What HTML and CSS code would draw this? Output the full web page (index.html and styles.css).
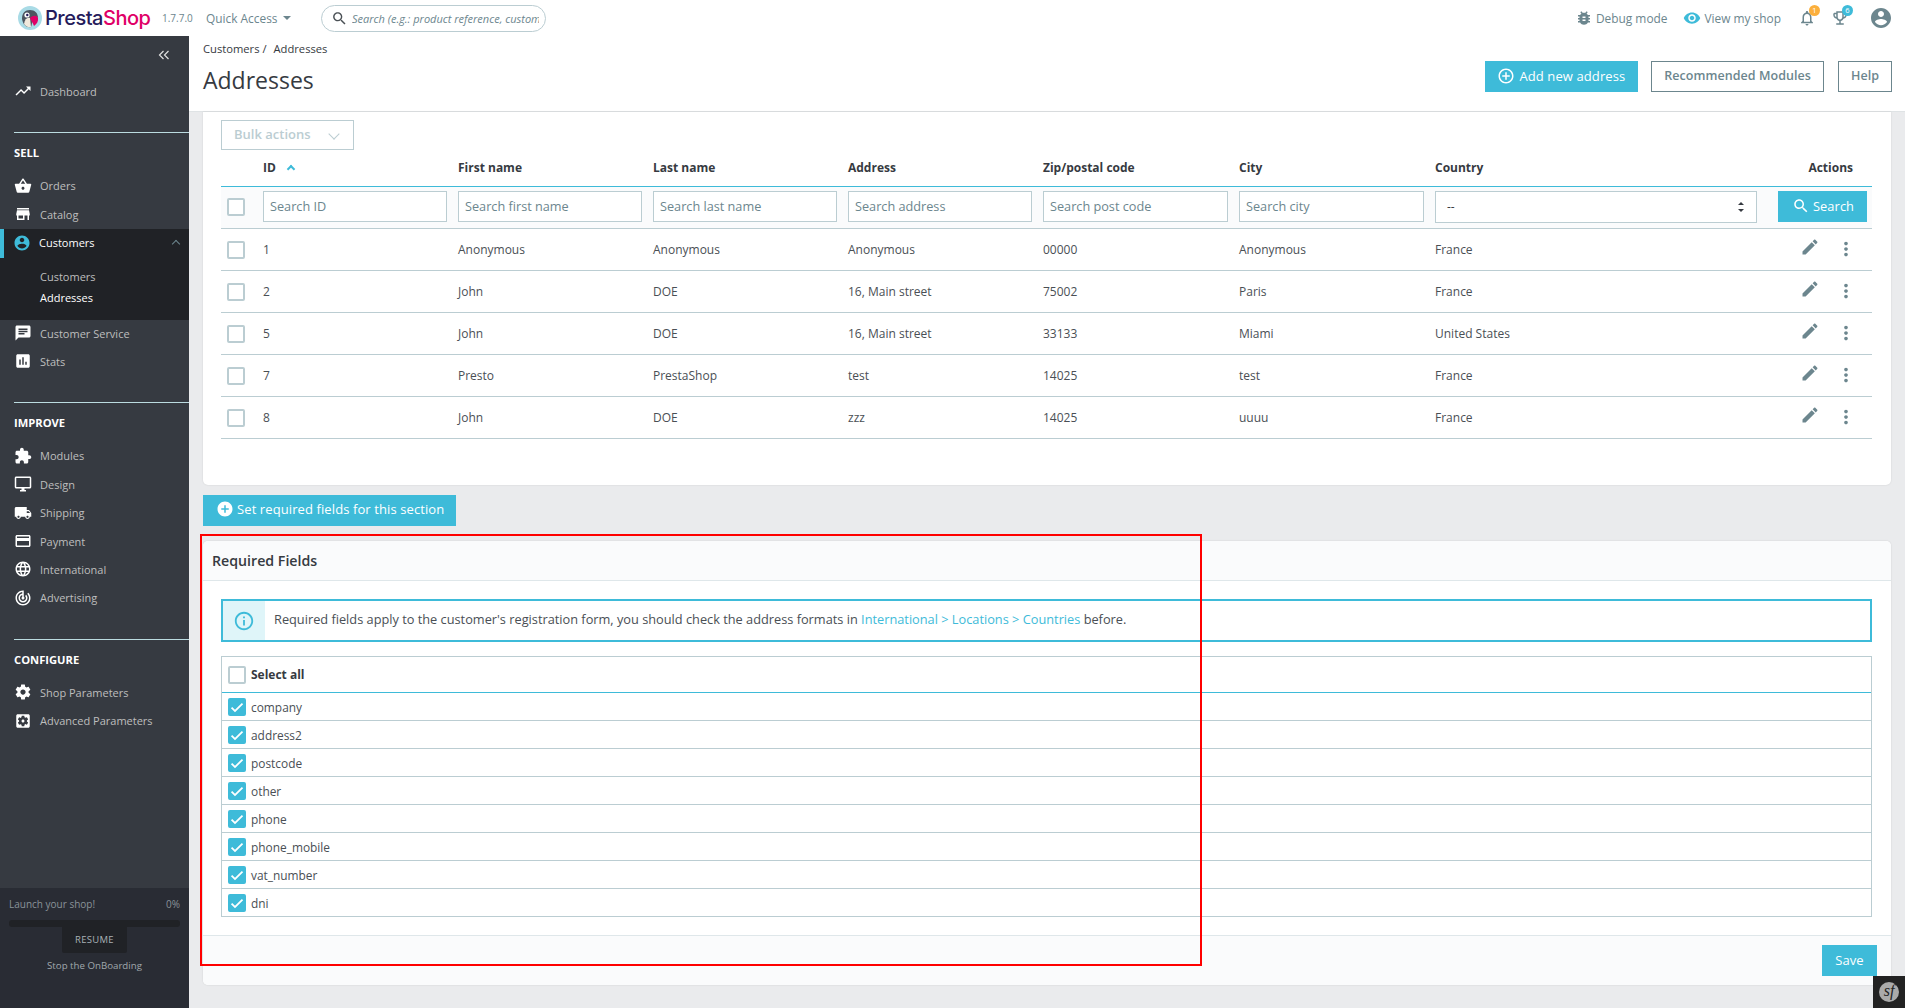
FILE: index.html
```html
<!DOCTYPE html>
<html lang="en">
<head>
    <meta charset="UTF-8">
    <meta name="viewport" content="width=device-width, initial-scale=1.0">
    <title>Addresses • PrestaShop</title>
    <link rel="stylesheet" href="styles.css">
</head>
<body>
    <!-- icon sprite -->
    <svg class="sprite" xmlns="http://www.w3.org/2000/svg">
        <symbol id="i-trend" viewBox="0 0 24 24"><path d="M16 6l2.29 2.29-4.88 4.88-4-4L2 16.59 3.41 18l6-6 4 4 6.3-6.29L22 12V6z"/></symbol>
        <symbol id="i-basket" viewBox="0 0 24 24"><path d="M17.21 9l-4.38-6.56c-.19-.28-.51-.42-.83-.42-.32 0-.64.14-.83.43L6.79 9H2c-.55 0-1 .45-1 1 0 .09.01.18.04.27l2.54 9.27c.23.84 1 1.46 1.92 1.46h13c.92 0 1.69-.62 1.93-1.46l2.54-9.27L23 10c0-.55-.45-1-1-1h-4.79zM9 9l3-4.4L15 9H9zm3 8c-1.1 0-2-.9-2-2s.9-2 2-2 2 .9 2 2-.9 2-2 2z"/></symbol>
        <symbol id="i-store" viewBox="0 0 24 24"><path d="M20 4H4v2h16V4zm1 10v-2l-1-5H4l-1 5v2h1v6h10v-6h4v6h2v-6h1zm-9 4H6v-4h6v4z"/></symbol>
        <symbol id="i-account" viewBox="0 0 24 24"><path d="M12 2C6.48 2 2 6.48 2 12s4.48 10 10 10 10-4.48 10-10S17.52 2 12 2zm0 3c1.66 0 3 1.34 3 3s-1.34 3-3 3-3-1.34-3-3 1.34-3 3-3zm0 14.2c-2.5 0-4.71-1.28-6-3.22.03-1.99 4-3.08 6-3.08 1.99 0 5.97 1.09 6 3.08-1.29 1.94-3.5 3.22-6 3.22z"/></symbol>
        <symbol id="i-chat" viewBox="0 0 24 24"><path d="M20 2H4c-1.1 0-1.99.9-1.99 2L2 22l4-4h14c1.1 0 2-.9 2-2V4c0-1.1-.9-2-2-2zM6 9h12v2H6V9zm8 5H6v-2h8v2zm4-6H6V6h12v2z"/></symbol>
        <symbol id="i-stats" viewBox="0 0 24 24"><path d="M19 3H5c-1.1 0-2 .9-2 2v14c0 1.1.9 2 2 2h14c1.1 0 2-.9 2-2V5c0-1.1-.9-2-2-2zM9 17H7v-7h2v7zm4 0h-2V7h2v10zm4 0h-2v-4h2v4z"/></symbol>
        <symbol id="i-puzzle" viewBox="0 0 24 24"><path d="M20.5 11H19V7c0-1.1-.9-2-2-2h-4V3.5C13 2.12 11.88 1 10.5 1S8 2.12 8 3.5V5H4c-1.1 0-1.99.9-1.99 2v3.8H3.5c1.49 0 2.7 1.21 2.7 2.7s-1.21 2.7-2.7 2.7H2V20c0 1.1.9 2 2 2h3.8v-1.5c0-1.49 1.21-2.7 2.7-2.7 1.49 0 2.7 1.21 2.7 2.7V22H17c1.1 0 2-.9 2-2v-4h1.5c1.38 0 2.5-1.12 2.5-2.5S21.88 11 20.5 11z"/></symbol>
        <symbol id="i-desktop" viewBox="0 0 24 24"><path d="M21 2H3c-1.1 0-2 .9-2 2v12c0 1.1.9 2 2 2h7v2H8v2h8v-2h-2v-2h7c1.1 0 2-.9 2-2V4c0-1.1-.9-2-2-2zm0 14H3V4h18v12z"/></symbol>
        <symbol id="i-truck" viewBox="0 0 24 24"><path d="M20 8h-3V4H3c-1.1 0-2 .9-2 2v11h2c0 1.66 1.34 3 3 3s3-1.34 3-3h6c0 1.66 1.34 3 3 3s3-1.34 3-3h2v-5l-3-4zM6 18.5c-.83 0-1.5-.67-1.5-1.5s.67-1.5 1.5-1.5 1.5.67 1.5 1.5-.67 1.5-1.5 1.5zm13.5-9l1.96 2.5H17V9.5h2.5zm-1.5 9c-.83 0-1.5-.67-1.5-1.5s.67-1.5 1.5-1.5 1.5.67 1.5 1.5-.67 1.5-1.5 1.5z"/></symbol>
        <symbol id="i-card" viewBox="0 0 24 24"><path d="M20 4H4c-1.11 0-1.99.89-1.99 2L2 18c0 1.11.89 2 2 2h16c1.11 0 2-.89 2-2V6c0-1.11-.89-2-2-2zm0 14H4v-6h16v6zm0-10H4V6h16v2z"/></symbol>
        <symbol id="i-globe" viewBox="0 0 24 24"><path d="M11.99 2C6.47 2 2 6.48 2 12s4.47 10 9.99 10C17.52 22 22 17.52 22 12S17.52 2 11.99 2zm6.93 6h-2.95c-.32-1.25-.78-2.45-1.38-3.56 1.84.63 3.37 1.91 4.33 3.56zM12 4.04c.83 1.2 1.48 2.53 1.91 3.96h-3.82c.43-1.43 1.08-2.76 1.91-3.96zM4.26 14C4.1 13.36 4 12.69 4 12s.1-1.36.26-2h3.38c-.08.66-.14 1.32-.14 2 0 .68.06 1.34.14 2H4.26zm.82 2h2.95c.32 1.25.78 2.45 1.38 3.56-1.84-.63-3.37-1.9-4.33-3.56zm2.95-8H5.08c.96-1.66 2.49-2.93 4.33-3.56C8.81 5.55 8.35 6.75 8.03 8zM12 19.96c-.83-1.2-1.48-2.53-1.91-3.96h3.82c-.43 1.43-1.08 2.76-1.91 3.96zM14.34 14H9.66c-.09-.66-.16-1.32-.16-2 0-.68.07-1.35.16-2h4.68c.09.65.16 1.32.16 2 0 .68-.07 1.34-.16 2zm.25 5.56c.6-1.11 1.06-2.31 1.38-3.56h2.95c-.96 1.65-2.49 2.93-4.33 3.56zM16.36 14c.08-.66.14-1.32.14-2 0-.68-.06-1.34-.14-2h3.38c.16.64.26 1.31.26 2s-.1 1.36-.26 2h-3.38z"/></symbol>
        <symbol id="i-target" viewBox="0 0 24 24"><path d="M19.07 4.93l-1.41 1.41C19.1 7.79 20 9.79 20 12c0 4.42-3.58 8-8 8s-8-3.58-8-8c0-4.08 3.05-7.44 7-7.93v2.02C8.16 6.57 6 9.03 6 12c0 3.31 2.69 6 6 6s6-2.69 6-6c0-1.66-.67-3.16-1.76-4.24l-1.41 1.41C15.55 9.9 16 10.9 16 12c0 2.21-1.79 4-4 4s-4-1.79-4-4c0-1.86 1.28-3.41 3-3.86v2.14c-.6.35-1 .98-1 1.72 0 1.1.9 2 2 2s2-.9 2-2c0-.74-.4-1.38-1-1.72V2h-1C6.48 2 2 6.48 2 12s4.48 10 10 10 10-4.48 10-10c0-2.76-1.12-5.26-2.93-7.07z"/></symbol>
        <symbol id="i-gear" viewBox="0 0 24 24"><path d="M19.43 12.98c.04-.32.07-.64.07-.98s-.03-.66-.07-.98l2.11-1.65c.19-.15.24-.42.12-.64l-2-3.46c-.12-.22-.39-.3-.61-.22l-2.49 1c-.52-.4-1.08-.73-1.69-.98l-.38-2.65C14.46 2.18 14.25 2 14 2h-4c-.25 0-.46.18-.49.42l-.38 2.65c-.61.25-1.17.59-1.69.98l-2.49-1c-.23-.09-.49 0-.61.22l-2 3.46c-.13.22-.07.49.12.64l2.11 1.65c-.04.32-.07.65-.07.98s.03.66.07.98l-2.11 1.65c-.19.15-.24.42-.12.64l2 3.46c.12.22.39.3.61.22l2.49-1c.52.4 1.08.73 1.69.98l.38 2.65c.03.24.24.42.49.42h4c.25 0 .46-.18.49-.42l.38-2.65c.61-.25 1.17-.59 1.69-.98l2.49 1c.23.09.49 0 .61-.22l2-3.46c.12-.22.07-.49-.12-.64l-2.11-1.65zM12 15.5c-1.93 0-3.5-1.57-3.5-3.5s1.57-3.5 3.5-3.5 3.5 1.57 3.5 3.5-1.57 3.5-3.5 3.5z"/></symbol>
        <symbol id="i-gearbox" viewBox="0 0 24 24"><path d="M12 10c-1.1 0-2 .9-2 2s.9 2 2 2 2-.9 2-2-.9-2-2-2zm7-7H5c-1.11 0-2 .9-2 2v14c0 1.1.89 2 2 2h14c1.11 0 2-.9 2-2V5c0-1.1-.89-2-2-2zm-1.75 9c0 .23-.02.46-.05.68l1.48 1.16c.13.11.17.3.08.45l-1.4 2.42c-.09.15-.27.21-.43.15l-1.74-.7c-.36.28-.76.51-1.18.69l-.26 1.85c-.03.17-.18.3-.35.3h-2.8c-.17 0-.32-.13-.35-.29l-.26-1.85c-.43-.18-.82-.41-1.18-.69l-1.74.7c-.16.06-.34 0-.43-.15l-1.4-2.42c-.09-.15-.05-.34.08-.45l1.48-1.16c-.03-.23-.05-.46-.05-.69 0-.23.02-.46.05-.68l-1.48-1.16c-.13-.11-.17-.3-.08-.45l1.4-2.42c.09-.15.27-.21.43-.15l1.74.7c.36-.28.76-.51 1.18-.69l.26-1.85c.03-.17.18-.3.35-.3h2.8c.17 0 .32.13.35.29l.26 1.85c.43.18.82.41 1.18.69l1.74-.7c.16-.06.34 0 .43.15l1.4 2.42c.09.15.05.34-.08.45l-1.48 1.16c.03.23.05.46.05.69z"/></symbol>
        <symbol id="i-bug" viewBox="0 0 24 24"><path d="M20 8h-2.81c-.45-.78-1.07-1.45-1.82-1.96L17 4.41 15.59 3l-2.17 2.17C12.96 5.06 12.49 5 12 5c-.49 0-.96.06-1.41.17L8.41 3 7 4.41l1.62 1.63C7.88 6.55 7.26 7.22 6.81 8H4v2h2.09c-.05.33-.09.66-.09 1v1H4v2h2v1c0 .34.04.67.09 1H4v2h2.81c1.04 1.79 2.97 3 5.19 3s4.15-1.21 5.19-3H20v-2h-2.09c.05-.33.09-.66.09-1v-1h2v-2h-2v-1c0-.34-.04-.67-.09-1H20V8zm-6 8h-4v-2h4v2zm0-4h-4v-2h4v2z"/></symbol>
        <symbol id="i-eye" viewBox="0 0 24 24"><path d="M12 4.5C7 4.5 2.73 7.61 1 12c1.73 4.39 6 7.5 11 7.5s9.27-3.11 11-7.5c-1.73-4.39-6-7.5-11-7.5zM12 17c-2.76 0-5-2.24-5-5s2.24-5 5-5 5 2.24 5 5-2.24 5-5 5zm0-8c-1.66 0-3 1.34-3 3s1.34 3 3 3 3-1.34 3-3-1.34-3-3-3z"/></symbol>
        <symbol id="i-bell" viewBox="0 0 24 24"><path d="M12 22c1.1 0 2-.9 2-2h-4c0 1.1.9 2 2 2zm6-6v-5c0-3.07-1.63-5.64-4.5-6.32V4c0-.83-.67-1.5-1.5-1.5s-1.5.67-1.5 1.5v.68C7.64 5.36 6 7.92 6 11v5l-2 2v1h16v-1l-2-2zm-2 1H8v-6c0-2.48 1.51-4.5 4-4.5s4 2.02 4 4.5v6z"/></symbol>
        <symbol id="i-trophy" viewBox="0 0 24 24"><path d="M19 5h-2V3H7v2H5c-1.1 0-2 .9-2 2v1c0 2.55 1.92 4.63 4.39 4.94.63 1.5 1.98 2.63 3.61 2.96V19H7v2h10v-2h-4v-3.1c1.63-.33 2.98-1.46 3.61-2.96C19.08 12.63 21 10.55 21 8V7c0-1.1-.9-2-2-2zM5 8V7h2v3.82C5.84 10.4 5 9.3 5 8zm7 6c-1.65 0-3-1.35-3-3V5h6v6c0 1.65-1.35 3-3 3zm7-6c0 1.3-.84 2.4-2 2.82V7h2v1z"/></symbol>
        <symbol id="i-edit" viewBox="0 0 24 24"><path d="M3 17.25V21h3.75L17.81 9.94l-3.75-3.75L3 17.25zM20.71 7.04c.39-.39.39-1.02 0-1.41l-2.34-2.34c-.39-.39-1.02-.39-1.41 0l-1.83 1.83 3.75 3.75 1.83-1.83z"/></symbol>
        <symbol id="i-more" viewBox="0 0 24 24"><path d="M12 8c1.1 0 2-.9 2-2s-.9-2-2-2-2 .9-2 2 .9 2 2 2zm0 2c-1.1 0-2 .9-2 2s.9 2 2 2 2-.9 2-2-.9-2-2-2zm0 6c-1.1 0-2 .9-2 2s.9 2 2 2 2-.9 2-2-.9-2-2-2z"/></symbol>
        <symbol id="i-search" viewBox="0 0 24 24"><path d="M15.5 14h-.79l-.28-.27C15.41 12.59 16 11.11 16 9.5 16 5.91 13.09 3 9.5 3S3 5.91 3 9.5 5.91 16 9.5 16c1.61 0 3.09-.59 4.23-1.57l.27.28v.79l5 4.99L20.49 19l-4.99-5zm-6 0C7.01 14 5 11.99 5 9.5S7.01 5 9.5 5 14 7.01 14 9.5 11.99 14 9.5 14z"/></symbol>
        <symbol id="i-add-line" viewBox="0 0 24 24"><path d="M13 7h-2v4H7v2h4v4h2v-4h4v-2h-4V7zm-1-5C6.48 2 2 6.48 2 12s4.48 10 10 10 10-4.48 10-10S17.52 2 12 2zm0 18c-4.41 0-8-3.59-8-8s3.59-8 8-8 8 3.59 8 8-3.59 8-8 8z"/></symbol>
        <symbol id="i-add" viewBox="0 0 24 24"><path d="M12 2C6.48 2 2 6.48 2 12s4.48 10 10 10 10-4.48 10-10S17.52 2 12 2zm5 11h-4v4h-2v-4H7v-2h4V7h2v4h4v2z"/></symbol>
        <symbol id="i-info" viewBox="0 0 24 24"><path d="M11 17h2v-6h-2v6zm1-15C6.48 2 2 6.48 2 12s4.48 10 10 10 10-4.48 10-10S17.52 2 12 2zm0 18c-4.41 0-8-3.59-8-8s3.59-8 8-8 8 3.59 8 8-3.59 8-8 8zM11 9h2V7h-2v2z"/></symbol>
        <symbol id="i-check" viewBox="0 0 24 24"><path d="M9 16.2L4.8 12l-1.9 1.9L9 20 21.2 7.8l-1.9-1.9z"/></symbol>
    </svg>

    <!-- top bar -->
    <header class="header">
        <div class="logo">
            <svg class="logo-mark" viewBox="0 0 24 24">
                <circle cx="12" cy="12" r="12" fill="#a9dbe6"/>
                <path d="M4 13c0-6 3-9 8-9s8 3 8 8c-2-2-4-2-5 0-1 3-1 7-2 9-4 1-8-2-9-8z" fill="#4c5560"/>
                <path d="M6 18c1-5 3-7 6-6l1 9c-3 1-5-1-7-3z" fill="#f1e9dc"/>
                <circle cx="9" cy="9" r="2.6" fill="#fff"/>
                <circle cx="9.3" cy="9" r="1.2" fill="#251b5b"/>
                <path d="M12 12c3-3 7-3 8 0 .5 3-1 6-4 8-1-3-3-5-4-8z" fill="#df0067"/>
            </svg>
            <span class="logo-word"><span class="logo-dark">Presta</span><span class="logo-pink">Shop</span></span>
        </div>
        <span class="version">1.7.7.0</span>
        <span class="quick">Quick Access<i class="caret"></i></span>
        <div class="top-search">
            <svg class="icon"><use href="#i-search"/></svg>
            <span class="top-search-text">Search (e.g.: product reference, customer name…)</span>
        </div>
        <div class="header-right">
            <span class="head-link"><svg class="icon"><use href="#i-bug"/></svg>Debug mode</span>
            <span class="head-link"><svg class="icon eye"><use href="#i-eye"/></svg>View my shop</span>
            <span class="notif"><svg class="icon"><use href="#i-bell"/></svg><b class="badge badge-orange">1</b></span>
            <span class="notif"><svg class="icon"><use href="#i-trophy"/></svg><b class="badge badge-blue">6</b></span>
            <svg class="icon avatar"><use href="#i-account"/></svg>
        </div>
    </header>

    <div class="page">
        <!-- sidebar -->
        <nav class="sidebar">
            <div class="collapse">
                <svg viewBox="0 0 12 10"><path d="M5.5 1 1.5 5l4 4M10.5 1l-4 4 4 4"/></svg>
            </div>
            <a class="nav-item"><svg class="icon"><use href="#i-trend"/></svg>Dashboard</a>

            <div class="nav-title">SELL</div>
            <a class="nav-item"><svg class="icon"><use href="#i-basket"/></svg>Orders</a>
            <a class="nav-item"><svg class="icon"><use href="#i-store"/></svg>Catalog</a>
            <div class="nav-open">
                <a class="nav-item nav-active"><svg class="icon"><use href="#i-account"/></svg>Customers<i class="chev"></i></a>
                <div class="subnav">
                    <a>Customers</a>
                    <a class="sub-current">Addresses</a>
                </div>
            </div>
            <a class="nav-item"><svg class="icon"><use href="#i-chat"/></svg>Customer Service</a>
            <a class="nav-item"><svg class="icon"><use href="#i-stats"/></svg>Stats</a>

            <div class="nav-title">IMPROVE</div>
            <a class="nav-item"><svg class="icon"><use href="#i-puzzle"/></svg>Modules</a>
            <a class="nav-item"><svg class="icon"><use href="#i-desktop"/></svg>Design</a>
            <a class="nav-item"><svg class="icon"><use href="#i-truck"/></svg>Shipping</a>
            <a class="nav-item"><svg class="icon"><use href="#i-card"/></svg>Payment</a>
            <a class="nav-item"><svg class="icon"><use href="#i-globe"/></svg>International</a>
            <a class="nav-item"><svg class="icon"><use href="#i-target"/></svg>Advertising</a>

            <div class="nav-title">CONFIGURE</div>
            <a class="nav-item"><svg class="icon"><use href="#i-gear"/></svg>Shop Parameters</a>
            <a class="nav-item"><svg class="icon"><use href="#i-gearbox"/></svg>Advanced Parameters</a>

            <div class="onboarding">
                <div class="onboarding-top"><span>Launch your shop!</span><span>0%</span></div>
                <div class="progress"></div>
                <div class="resume">RESUME</div>
                <div class="stop">Stop the OnBoarding</div>
            </div>
        </nav>

        <!-- main column -->
        <main class="main">
            <div class="toolbar">
                <div class="toolbar-left">
                    <div class="crumbs"><span>Customers /</span><span>Addresses</span></div>
                    <h1>Addresses</h1>
                </div>
                <div class="toolbar-btns">
                    <a class="btn btn-blue btn-add"><svg class="icon"><use href="#i-add-line"/></svg>Add new address</a>
                    <a class="btn btn-line">Recommended Modules</a>
                    <a class="btn btn-line">Help</a>
                </div>
            </div>

            <div class="content">
                <section class="card list-card">
                    <div class="bulk"><span>Bulk actions</span><i class="bulk-arrow"></i></div>
                    <table class="grid">
                        <colgroup>
                            <col class="c-check"><col class="c-std"><col class="c-std"><col class="c-std"><col class="c-std"><col class="c-wide"><col class="c-wide"><col class="c-country"><col>
                        </colgroup>
                        <thead>
                            <tr class="head-row">
                                <th></th>
                                <th>ID<i class="sort-up"></i></th>
                                <th>First name</th>
                                <th>Last name</th>
                                <th>Address</th>
                                <th>Zip/postal code</th>
                                <th>City</th>
                                <th>Country</th>
                                <th class="th-actions">Actions</th>
                            </tr>
                            <tr class="filter-row">
                                <td><span class="check"></span></td>
                                <td><div class="field">Search ID</div></td>
                                <td><div class="field">Search first name</div></td>
                                <td><div class="field">Search last name</div></td>
                                <td><div class="field">Search address</div></td>
                                <td><div class="field">Search post code</div></td>
                                <td><div class="field">Search city</div></td>
                                <td><div class="field field-select"><span>--</span><i class="updown"></i></div></td>
                                <td class="td-search"><a class="btn btn-blue btn-search"><svg class="icon"><use href="#i-search"/></svg>Search</a></td>
                            </tr>
                        </thead>
                        <tbody>
                            <tr><td><span class="check"></span></td><td>1</td><td>Anonymous</td><td>Anonymous</td><td>Anonymous</td><td>00000</td><td>Anonymous</td><td>France</td><td class="row-actions"><svg class="icon"><use href="#i-edit"/></svg><svg class="icon"><use href="#i-more"/></svg></td></tr>
                            <tr><td><span class="check"></span></td><td>2</td><td>John</td><td>DOE</td><td>16, Main street</td><td>75002</td><td>Paris</td><td>France</td><td class="row-actions"><svg class="icon"><use href="#i-edit"/></svg><svg class="icon"><use href="#i-more"/></svg></td></tr>
                            <tr><td><span class="check"></span></td><td>5</td><td>John</td><td>DOE</td><td>16, Main street</td><td>33133</td><td>Miami</td><td>United States</td><td class="row-actions"><svg class="icon"><use href="#i-edit"/></svg><svg class="icon"><use href="#i-more"/></svg></td></tr>
                            <tr><td><span class="check"></span></td><td>7</td><td>Presto</td><td>PrestaShop</td><td>test</td><td>14025</td><td>test</td><td>France</td><td class="row-actions"><svg class="icon"><use href="#i-edit"/></svg><svg class="icon"><use href="#i-more"/></svg></td></tr>
                            <tr><td><span class="check"></span></td><td>8</td><td>John</td><td>DOE</td><td>zzz</td><td>14025</td><td>uuuu</td><td>France</td><td class="row-actions"><svg class="icon"><use href="#i-edit"/></svg><svg class="icon"><use href="#i-more"/></svg></td></tr>
                        </tbody>
                    </table>
                </section>

                <a class="btn btn-blue btn-required"><svg class="icon"><use href="#i-add"/></svg>Set required fields for this section</a>

                <section class="card required-card">
                    <h2 class="card-head">Required Fields</h2>
                    <div class="card-body">
                        <div class="alert">
                            <div class="alert-icon"><svg class="icon"><use href="#i-info"/></svg></div>
                            <p>Required fields apply to the customer's registration form, you should check the address formats in <a>International &gt; Locations &gt; Countries</a> before.</p>
                        </div>
                        <div class="fields">
                            <div class="fields-all"><span class="check"></span><b>Select all</b></div>
                            <div class="fields-row"><span class="check on"><svg><use href="#i-check"/></svg></span>company</div>
                            <div class="fields-row"><span class="check on"><svg><use href="#i-check"/></svg></span>address2</div>
                            <div class="fields-row"><span class="check on"><svg><use href="#i-check"/></svg></span>postcode</div>
                            <div class="fields-row"><span class="check on"><svg><use href="#i-check"/></svg></span>other</div>
                            <div class="fields-row"><span class="check on"><svg><use href="#i-check"/></svg></span>phone</div>
                            <div class="fields-row"><span class="check on"><svg><use href="#i-check"/></svg></span>phone_mobile</div>
                            <div class="fields-row"><span class="check on"><svg><use href="#i-check"/></svg></span>vat_number</div>
                            <div class="fields-row"><span class="check on"><svg><use href="#i-check"/></svg></span>dni</div>
                        </div>
                    </div>
                    <div class="card-foot"><a class="btn btn-blue">Save</a></div>
                </section>
            </div>

            <!-- red annotation round the required fields block -->
            <div class="annotation"></div>
        </main>
    </div>

    <div class="sf-badge"><span>sf</span></div>
</body>
</html>
```

FILE: styles.css
```css
* { box-sizing: border-box; }

body {
    margin: 0;
    height: 1008px;
    overflow: hidden;
    font-family: "Open Sans", "Liberation Sans", sans-serif;
    font-size: 12px;
    color: #363a41;
    background: #eaebed;
}

.sprite { display: none; }

.icon {
    width: 18px;
    height: 18px;
    fill: currentColor;
    flex: none;
}

/* top bar */
.header {
    display: flex;
    align-items: center;
    height: 36px;
    background: #fff;
}

.logo {
    display: flex;
    align-items: center;
    width: 162px;
    padding-left: 18px;
}

.logo-mark { width: 24px; height: 24px; flex: none; }

.logo-word {
    margin-left: 3px;
    font-family: Inter, "Liberation Sans", sans-serif;
    font-size: 20px;
    font-weight: 500;
    letter-spacing: -0.5px;
}

.logo-dark { color: #251b5b; }
.logo-pink { color: #df0067; }

.version { width: 44px; font-size: 10px; color: #6c868e; }

.quick {
    display: flex;
    align-items: center;
    width: 115px;
    font-size: 11.9px;
    color: #6c868e;
}

.caret {
    margin-left: 5px;
    border: 4px solid transparent;
    border-top: 4px solid #6c868e;
    border-bottom: 0;
}

.top-search {
    display: flex;
    align-items: center;
    width: 225px;
    height: 27px;
    padding: 0 6px 0 9px;
    border: 1px solid #bbcdd2;
    border-radius: 14px;
    color: #363a41;
}

.top-search .icon { width: 17px; height: 17px; margin-right: 4px; color: #4a5055; }

.top-search-text {
    overflow: hidden;
    white-space: nowrap;
    font-size: 11px;
    font-style: italic;
    color: #6c868e;
}

.header-right {
    display: flex;
    align-items: center;
    margin-left: auto;
    padding-right: 12px;
    color: #6c868e;
}

.head-link {
    display: flex;
    align-items: center;
    margin-right: 16px;
    font-size: 11.9px;
}

.head-link:nth-child(2) { margin-right: 17px; }
.head-link .icon { margin-right: 3px; }
.head-link .eye { color: #3ebbd9; margin-right: 3px; }

.notif { position: relative; display: flex; margin-right: 15px; }
.notif + .notif { margin-right: 20px; }

.badge {
    position: absolute;
    top: -4px;
    right: -4px;
    width: 11px;
    height: 11px;
    border-radius: 50%;
    font-size: 7.5px;
    line-height: 11px;
    font-weight: 400;
    text-align: center;
    color: #fff;
}

.badge-orange { background: #fbaf3c; }
.badge-blue { background: #3ebbd9; }
.avatar { width: 24px; height: 24px; }

.page { display: flex; height: 972px; }

/* sidebar */
.sidebar {
    display: flex;
    flex-direction: column;
    width: 189px;
    flex: none;
    background: #363a41;
    color: #bebebe;
}

.collapse {
    display: flex;
    justify-content: flex-end;
    height: 42px;
    padding: 14px 19px 0 0;
}

.collapse svg {
    width: 12px;
    height: 10px;
    fill: none;
    stroke: #e0e0e0;
    stroke-width: 1.2;
}

.nav-item {
    display: flex;
    align-items: center;
    height: 28.4px;
    padding: 0 0 1.5px 14px;
    font-size: 11px;
    color: #bebebe;
}

.nav-item .icon {
    width: 18px;
    height: 18px;
    margin-right: 8px;
    color: #fff;
}

.nav-title {
    margin: 26px 0 0 14px;
    height: 40px;
    padding-top: 10px;
    border-top: 1px solid #bbdbe0;
    font-size: 11.2px;
    line-height: 20px;
    font-weight: 700;
    color: #fff;
}

.nav-open { background: #202226; }

.nav-active {
    position: relative;
    padding-left: 13px;
    color: #fff;
}

.nav-active::before {
    content: "";
    position: absolute;
    left: 0;
    top: 0;
    bottom: 0;
    width: 4px;
    background: #3ebbd9;
}

.nav-active .icon { color: #3ebbd9; }

.chev {
    position: absolute;
    right: 10px;
    top: 12px;
    width: 6px;
    height: 6px;
    border-left: 1.5px solid #6c868e;
    border-top: 1.5px solid #6c868e;
    transform: rotate(45deg);
}

.subnav { padding: 8.6px 0 11.5px 40px; }
.subnav a { display: block; height: 21px; font-size: 11px; line-height: 21px; }
.subnav .sub-current { color: #fff; }

.onboarding {
    margin-top: auto;
    height: 120px;
    padding: 9px 9px 0;
    background: #292c34;
    font-size: 10px;
    color: #8a9399;
}

.onboarding-top { display: flex; justify-content: space-between; height: 23px; line-height: 14px; }
.progress { height: 7px; border-radius: 3px; background: #202226; }

.resume {
    width: 65px;
    height: 26px;
    margin: 0 auto;
    border-radius: 0 0 2px 2px;
    background: #202226;
    line-height: 25px;
    text-align: center;
    font-size: 9.5px;
    letter-spacing: 0.3px;
    color: #a8b1b5;
}

.stop { margin-top: 6px; text-align: center; font-size: 9.7px; line-height: 14px; color: #a0a8ad; }

/* main column */
.main { position: relative; flex: 1; min-width: 0; }

.toolbar {
    display: flex;
    justify-content: space-between;
    height: 76px;
    padding: 0 13px 0 14px;
    background: #fff;
    border-bottom: 1px solid #dfe3e5;
}

.crumbs { display: flex; gap: 7px; padding-top: 5px; font-size: 11.2px; line-height: 16px; color: #363a41; }

h1 {
    margin: 7px 0 0;
    font-size: 23px;
    font-weight: 400;
    line-height: 32px;
    color: #363a41;
}

.toolbar-btns { display: flex; gap: 13px; padding-top: 25px; align-items: flex-start; }
.toolbar-btns .btn:last-child { margin-left: 1px; }

.btn {
    display: inline-flex;
    align-items: center;
    justify-content: center;
    height: 31px;
    padding: 0 12px 2px;
    font-size: 12.5px;
    font-weight: 600;
    letter-spacing: 0.05px;
    white-space: nowrap;
}

.btn-blue { background: #3ebbd9; color: #fff; font-weight: 500; font-size: 13px; letter-spacing: 0.1px; }
.btn-line { border: 1px solid #6c868e; color: #6c868e; }

.btn-add { padding: 0 13px 2px 12px; }
.btn-add .icon { margin-right: 4px; }

.content { padding: 0 14px; }

.card {
    background: #fff;
    border-radius: 5px;
    box-shadow: 0 0 2px rgba(0, 0, 0, 0.12);
}

/* list card */
.list-card { height: 373px; padding: 8px 19px 0 18px; border-radius: 0 0 5px 5px; }

.bulk {
    display: flex;
    align-items: center;
    justify-content: space-between;
    width: 133px;
    height: 30px;
    padding: 0 12px;
    border: 1px solid #bbcdd2;
    font-size: 13px;
    font-weight: 600;
    color: #bbcdd2;
}

.bulk span { margin-top: -2px; }

.bulk-arrow {
    width: 8px;
    height: 8px;
    margin: -3px 3px 0 0;
    border-right: 1.5px solid #bbcdd2;
    border-bottom: 1.5px solid #bbcdd2;
    transform: rotate(45deg);
}

.grid { width: 100%; table-layout: fixed; border-collapse: collapse; font-size: 12px; }
.c-check { width: 42px; }
.c-std { width: 195px; }
.c-wide { width: 196px; }
.c-country { width: 333px; }

.grid th, .grid td { padding: 0 11px 0 0; text-align: left; }
.grid th:first-child, .grid td:first-child { padding: 0 0 0 6px; }

.head-row { height: 36px; }
.head-row th { font-weight: 700; border-bottom: 1px solid #3ebbd9; color: #363a41; }
.grid .th-actions { padding-right: 19px; text-align: right; }

.sort-up {
    display: inline-block;
    width: 6px;
    height: 6px;
    margin: 0 0 0 12px;
    border-left: 2px solid #3ebbd9;
    border-top: 2px solid #3ebbd9;
    transform: rotate(45deg);
}

.filter-row { height: 42px; background: #fafbfc; }
.filter-row td { border-bottom: 1px solid #bbcdd2; }

.grid tbody tr { height: 42px; }
.grid tbody td { border-bottom: 1px solid #bbcdd2; color: #4a4f55; }
.grid tbody .check { margin-top: 2px; }

.check {
    display: inline-flex;
    align-items: center;
    justify-content: center;
    width: 18px;
    height: 18px;
    border: 2px solid #bbcdd2;
    border-radius: 2px;
    background: #fff;
    vertical-align: middle;
}

.check.on { background: #3ebbd9; border-color: #3ebbd9; }
.check svg { width: 16px; height: 16px; fill: #fff; flex: none; }

.field {
    height: 31px;
    margin-bottom: 2px;
    padding: 0 6px;
    border: 1px solid #bbcdd2;
    background: #fff;
    font-size: 12.7px;
    line-height: 28px;
    color: #6c868e;
}

.field-select {
    display: flex;
    justify-content: space-between;
    align-items: center;
    padding: 0 11px 0 11px;
    height: 32px;
    margin-bottom: 1px;
    font-size: 12px;
    color: #363a41;
}

.updown { position: relative; width: 7px; height: 10px; }

.updown::before, .updown::after {
    content: "";
    position: absolute;
    left: 0;
    border: 3.5px solid transparent;
}

.updown::before { top: 0; border-bottom-color: #363a41; border-top: 0; }
.updown::after { bottom: 0; border-top-color: #363a41; border-bottom: 0; }

.grid .td-search { padding: 0 5px 0 0; text-align: right; }
.btn-search { width: 89px; margin-bottom: 2px; padding: 0 13px 1px 14px; vertical-align: middle; font-size: 12.8px; }
.btn-search .icon { margin-right: 3px; }

.grid .row-actions { padding: 0; color: #6c868e; }
.row-actions .icon { vertical-align: middle; }
.row-actions .icon:first-child { width: 20px; height: 20px; margin: 0 0 4px 32px; }
.row-actions .icon:last-child { width: 22px; height: 22px; margin-left: 15px; }

.btn-required { display: flex; margin: 10px 0 15px; padding: 0 0 3px 12.5px; justify-content: flex-start; width: 253px; }
.btn-required .icon { margin-right: 3.5px; }

/* required fields card */
.required-card { height: 444px; display: flex; flex-direction: column; }

.card-head {
    margin: 0;
    height: 40px;
    padding: 0 9px;
    background: #fafbfc;
    border-bottom: 1px solid #dfe7ea;
    border-radius: 5px 5px 0 0;
    font-size: 14.2px;
    font-weight: 600;
    line-height: 40px;
}

.card-body { padding: 18px 19px 18px 18px; }

.alert {
    display: flex;
    align-items: center;
    height: 43px;
    border: 2px solid #3ebbd9;
    color: #4a4f55;
}

.alert p { margin: 0 0 3px; padding-left: 9px; font-size: 12.78px; }
.alert a { color: #3ebbd9; }

.alert-icon {
    display: flex;
    align-items: center;
    justify-content: center;
    width: 42px;
    height: 100%;
    background: #dff5f9;
    color: #3ebbd9;
}

.alert-icon .icon { width: 22px; height: 22px; }

.fields { margin-top: 14px; border: 1px solid #bbcdd2; }

.fields-all {
    display: flex;
    align-items: center;
    gap: 5px;
    height: 36px;
    padding-left: 6px;
    border-bottom: 1px solid #3ebbd9;
}

.fields-row {
    display: flex;
    align-items: center;
    gap: 5px;
    height: 28px;
    padding-left: 6px;
    border-bottom: 1px solid #bbcdd2;
    font-size: 11.9px;
    color: #4a4f55;
}

.fields-row:last-child { height: 27px; border-bottom: 0; }

.card-foot {
    display: flex;
    justify-content: flex-end;
    align-items: flex-start;
    flex: 1;
    padding: 9px 14px 0 0;
    background: #fafbfc;
    border-top: 1px solid #dfe7ea;
    border-radius: 0 0 5px 5px;
}

.card-foot .btn { width: 55px; padding: 0 0 2px; }

/* red annotation */
.annotation {
    position: absolute;
    left: 11px;
    top: 498px;
    width: 1002px;
    height: 432px;
    border: 2px solid #f00;
}

.sf-badge {
    position: fixed;
    right: 0;
    bottom: 0;
    display: flex;
    align-items: center;
    justify-content: center;
    width: 32px;
    height: 32px;
    background: #222;
}

.sf-badge span {
    width: 20px;
    height: 20px;
    border-radius: 50%;
    background: #aaa;
    font-family: "Liberation Serif", serif;
    font-size: 16px;
    font-style: italic;
    line-height: 18px;
    text-align: center;
    color: #222;
}
```
